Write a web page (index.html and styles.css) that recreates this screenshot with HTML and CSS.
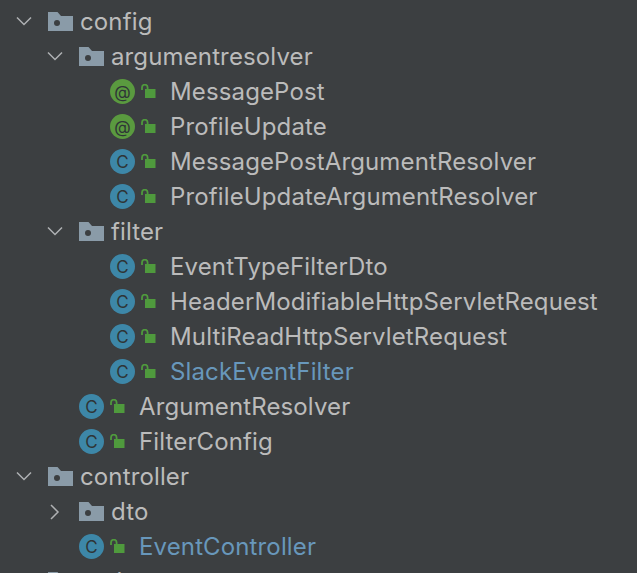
FILE: index.html
```html
<!DOCTYPE html>
<html lang="en">
<head>
    <meta charset="UTF-8">
    <title>Project tree</title>
    <link rel="stylesheet" href="styles.css">
</head>
<body>
    <svg class="defs" width="0" height="0">
        <symbol id="folder" viewBox="0 0 25 20">
            <path d="M0 0H9.500L13 4H25V19H0Z" fill="#8a9ba8"/>
            <circle cx="9" cy="11" r="3" fill="#3c3f41"/>
        </symbol>
        <symbol id="lock" viewBox="0 0 16 16">
            <path d="M5 5H15.500V14H5Z" fill="#4f9a3d"/>
            <path d="M2 6V3.500A2.800 2.800 0 0 1 7.600 3.500V6" fill="none" stroke="#4f9a3d" stroke-width="1.800"/>
        </symbol>
        <symbol id="down" viewBox="0 0 16 16">
            <path d="M1 3.500L8 10.500L15 3.500" fill="none" stroke="#afb1b3" stroke-width="1.500"/>
        </symbol>
        <symbol id="right" viewBox="0 0 16 16">
            <path d="M4 1L11 8L4 15" fill="none" stroke="#afb1b3" stroke-width="1.500"/>
        </symbol>
    </svg>

    <ul class="tree">
        <li class="row lvl-0"><svg class="arrow"><use href="#down"/></svg><svg class="folder"><use href="#folder"/></svg><span>config</span></li>
        <li class="row lvl-1"><svg class="arrow"><use href="#down"/></svg><svg class="folder"><use href="#folder"/></svg><span>argumentresolver</span></li>
        <li class="row lvl-2"><i class="badge anno">@</i><svg class="lock"><use href="#lock"/></svg><span>MessagePost</span></li>
        <li class="row lvl-2"><i class="badge anno">@</i><svg class="lock"><use href="#lock"/></svg><span>ProfileUpdate</span></li>
        <li class="row lvl-2"><i class="badge cls">C</i><svg class="lock"><use href="#lock"/></svg><span>MessagePostArgumentResolver</span></li>
        <li class="row lvl-2"><i class="badge cls">C</i><svg class="lock"><use href="#lock"/></svg><span>ProfileUpdateArgumentResolver</span></li>
        <li class="row lvl-1"><svg class="arrow"><use href="#down"/></svg><svg class="folder"><use href="#folder"/></svg><span>filter</span></li>
        <li class="row lvl-2"><i class="badge cls">C</i><svg class="lock"><use href="#lock"/></svg><span>EventTypeFilterDto</span></li>
        <li class="row lvl-2"><i class="badge cls">C</i><svg class="lock"><use href="#lock"/></svg><span>HeaderModifiableHttpServletRequest</span></li>
        <li class="row lvl-2"><i class="badge cls">C</i><svg class="lock"><use href="#lock"/></svg><span>MultiReadHttpServletRequest</span></li>
        <li class="row lvl-2 changed"><i class="badge cls">C</i><svg class="lock"><use href="#lock"/></svg><span>SlackEventFilter</span></li>
        <li class="row lvl-1b"><i class="badge cls">C</i><svg class="lock"><use href="#lock"/></svg><span>ArgumentResolver</span></li>
        <li class="row lvl-1b"><i class="badge cls">C</i><svg class="lock"><use href="#lock"/></svg><span>FilterConfig</span></li>
        <li class="row lvl-0"><svg class="arrow"><use href="#down"/></svg><svg class="folder"><use href="#folder"/></svg><span>controller</span></li>
        <li class="row lvl-1"><svg class="arrow"><use href="#right"/></svg><svg class="folder"><use href="#folder"/></svg><span>dto</span></li>
        <li class="row lvl-1b changed"><i class="badge cls">C</i><svg class="lock"><use href="#lock"/></svg><span>EventController</span></li>
        <li class="row lvl-0"><svg class="arrow"><use href="#right"/></svg><svg class="folder"><use href="#folder"/></svg><span>entity</span></li>
    </ul>
</body>
</html>
```

FILE: styles.css
```css
html, body {
    height: 100%;
    overflow: hidden;
}
body {
    margin: 0;
    background-color: #3c3f41;
    color: #bbbbbb;
    font-family: Inter, "Liberation Sans", sans-serif;
    font-size: 24px;
    letter-spacing: 0.13px;
}
.defs {
    display: block;
    height: 0;
}
.tree {
    list-style: none;
    margin: 0;
    padding: 4px 0 0;
}
.row {
    display: flex;
    align-items: center;
    height: 35px;
    white-space: nowrap;
}
.lvl-0 { padding-left: 16px; }
.lvl-1 { padding-left: 47px; }
.lvl-1b { padding-left: 79px; }
.lvl-2 { padding-left: 110px; }
.arrow {
    width: 16px;
    height: 16px;
    margin-right: 16px;
}
.folder {
    width: 25px;
    height: 20px;
    margin-right: 7px;
}
.badge {
    width: 25px;
    height: 25px;
    border-radius: 50%;
    display: flex;
    align-items: center;
    justify-content: center;
    font-style: normal;
    font-size: 17px;
    color: #2f3537;
    margin-right: 5px;
}
.anno { background: #5a9a3f; }
.cls { background: #3d87a8; }
.lock {
    width: 16px;
    height: 16px;
    margin-right: 14px;
}
.changed span {
    color: #6897bb;
}
```
